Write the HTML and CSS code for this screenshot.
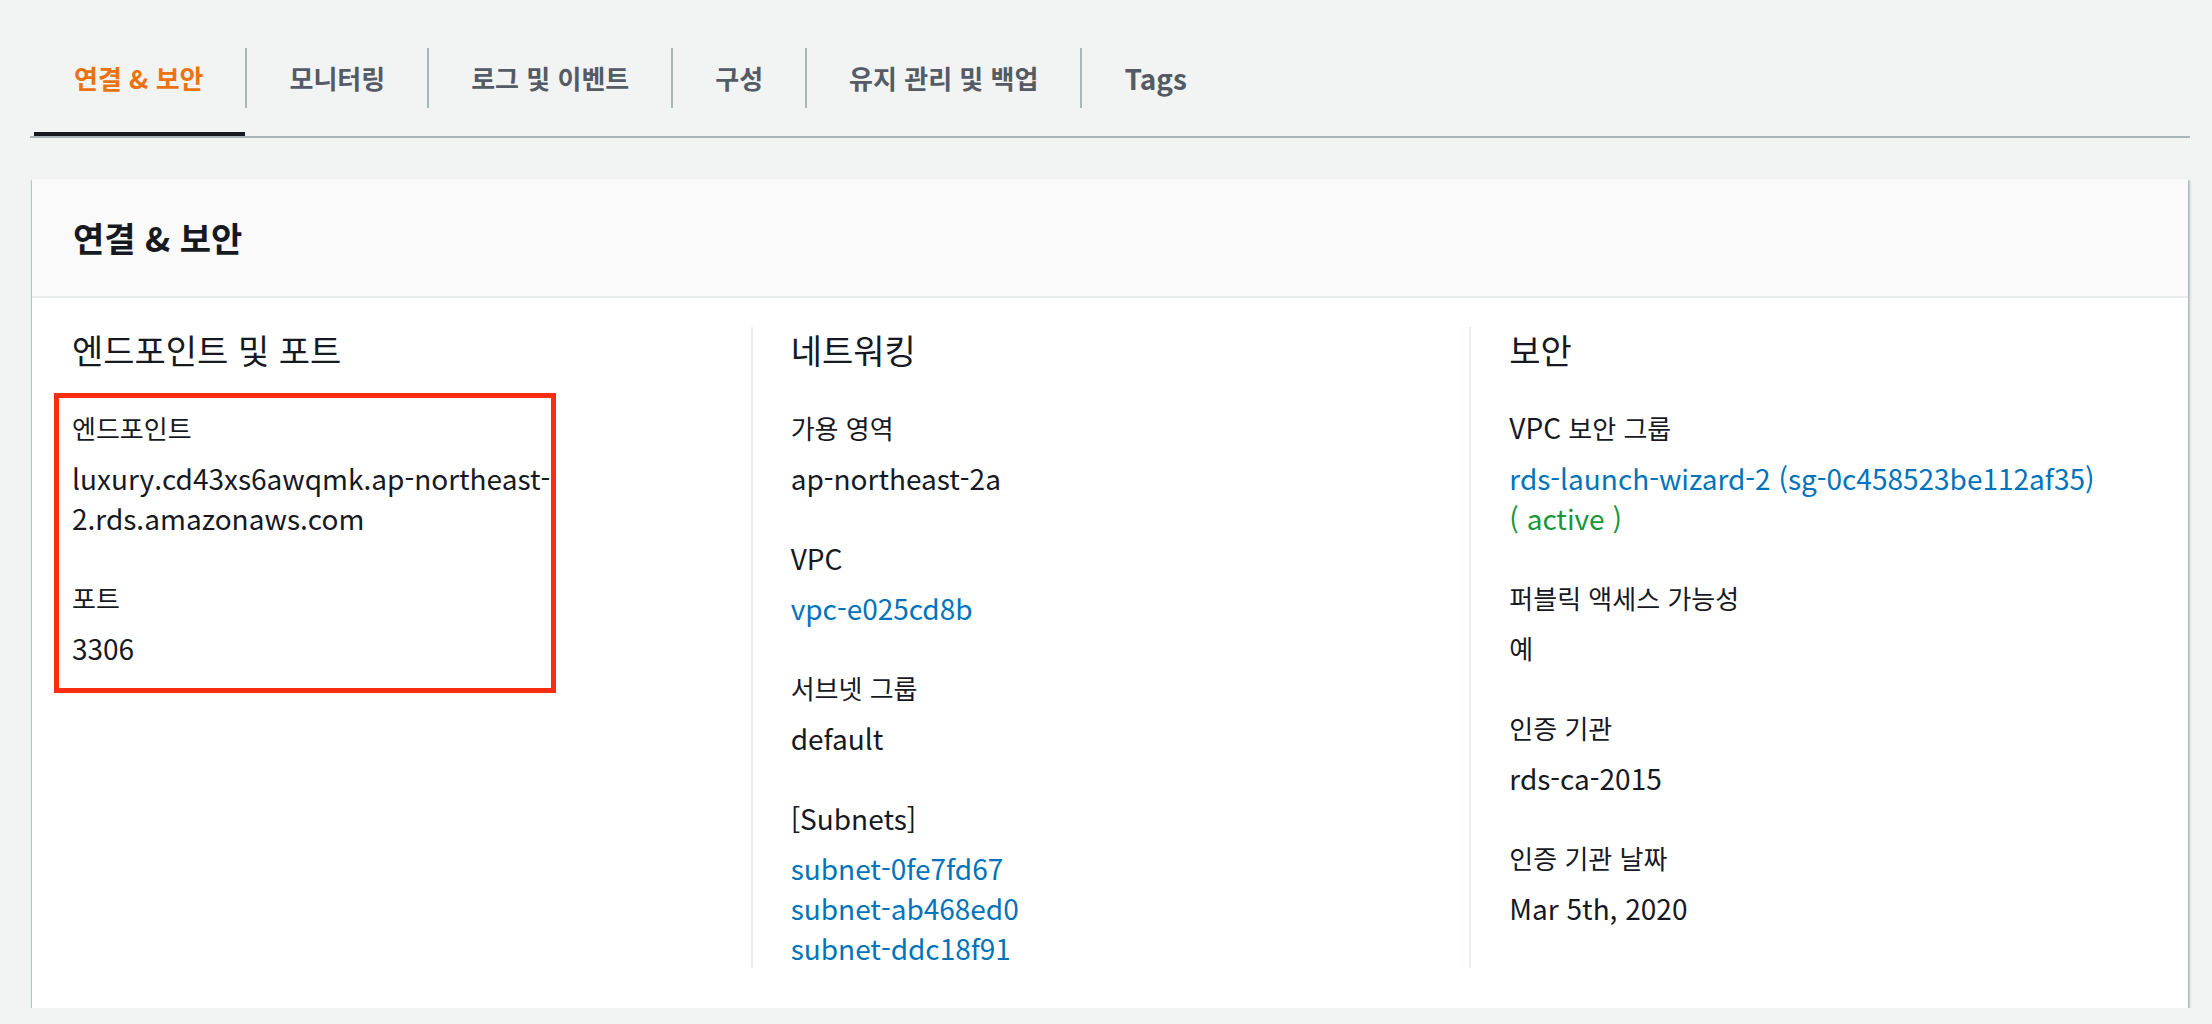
FILE: index.html
```html
<!DOCTYPE html>
<html lang="ko">
<head>
<meta charset="utf-8">
<title>연결 &amp; 보안</title>
<link rel="stylesheet" href="styles.css">
</head>
<body>
<div class="page">
  <nav class="tabs">
    <a class="tab tab-active"><span class="tab-label">연결 &amp; 보안</span></a>
    <a class="tab"><span class="tab-label">모니터링</span></a>
    <a class="tab"><span class="tab-label">로그 및 이벤트</span></a>
    <a class="tab"><span class="tab-label">구성</span></a>
    <a class="tab"><span class="tab-label">유지 관리 및 백업</span></a>
    <a class="tab"><span class="tab-label tab-latin">Tags</span></a>
  </nav>

  <section class="card">
    <header class="card-header">
      <h2 class="card-title">연결 &amp; 보안</h2>
    </header>
    <div class="card-body">
      <div class="col col-first">
        <h3 class="col-title">엔드포인트 및 포트</h3>
        <div class="item">
          <div class="label">엔드포인트</div>
          <div class="value">luxury.cd43xs6awqmk.ap-northeast-2.rds.amazonaws.com</div>
        </div>
        <div class="item">
          <div class="label">포트</div>
          <div class="value">3306</div>
        </div>
        <div class="annot"></div>
      </div>

      <div class="col">
        <h3 class="col-title">네트워킹</h3>
        <div class="item">
          <div class="label">가용 영역</div>
          <div class="value">ap-northeast-2a</div>
        </div>
        <div class="item">
          <div class="label label-latin">VPC</div>
          <div class="value"><a class="link">vpc-e025cd8b</a></div>
        </div>
        <div class="item">
          <div class="label">서브넷 그룹</div>
          <div class="value">default</div>
        </div>
        <div class="item">
          <div class="label label-latin">[Subnets]</div>
          <div class="value">
            <a class="link block">subnet-0fe7fd67</a>
            <a class="link block">subnet-ab468ed0</a>
            <a class="link block">subnet-ddc18f91</a>
          </div>
        </div>
      </div>

      <div class="col">
        <h3 class="col-title">보안</h3>
        <div class="item">
          <div class="label"><span class="latin">VPC</span> 보안 그룹</div>
          <div class="value"><a class="link">rds-launch-wizard-2 (sg-0c458523be112af35)</a><span class="status block">( active )</span></div>
        </div>
        <div class="item">
          <div class="label">퍼블릭 액세스 가능성</div>
          <div class="value value-ko">예</div>
        </div>
        <div class="item">
          <div class="label">인증 기관</div>
          <div class="value">rds-ca-2015</div>
        </div>
        <div class="item">
          <div class="label">인증 기관 날짜</div>
          <div class="value">Mar 5th, 2020</div>
        </div>
      </div>
    </div>
  </section>
</div>
</body>
</html>
```

FILE: styles.css
```css
* { box-sizing: border-box; }

html, body {
  margin: 0;
  padding: 0;
  background: #f2f3f3;
}

body {
  font-family: "Noto Sans CJK KR", "Noto Sans", sans-serif;
  color: #16191f;
}

.page {
  padding: 20px 22px 0 30px;
}

/* Tabs */
.tabs {
  display: flex;
  border-bottom: 2px solid #aab7b8;
  padding-left: 4px;
}

.tab {
  display: block;
  padding: 28px 0 24px;
  border-bottom: 4px solid transparent;
  color: #545b64;
  font-weight: 700;
  font-size: 26px;
  text-decoration: none;
  cursor: pointer;
}

.tab + .tab .tab-label {
  border-left: 2px solid #aab7b8;
}

.tab-label {
  display: block;
  height: 60px;
  line-height: 60px;
  padding: 0 42px;
  white-space: nowrap;
}

.tab:first-child .tab-label {
  padding-left: 40px;
}

.tab-latin {
  font-size: 28px;
}

.tab-active {
  color: #ec7211;
  border-bottom-color: #16191f;
}

/* Card */
.card {
  margin: 41px 2px 0 2px;
  background: #ffffff;
  box-shadow: 0 2px 2px 0 rgba(0, 28, 36, 0.35),
              2px 1px 2px 0 rgba(0, 28, 36, 0.2),
              -1px 1px 1px 0 rgba(0, 28, 36, 0.12);
}

.card-header {
  height: 119px;
  display: flex;
  align-items: center;
  padding: 0 41px;
  background: #fafafa;
  border-bottom: 2px solid #eaeded;
}

.card-title {
  margin: 0;
  font-size: 34px;
  font-weight: 700;
  line-height: 40px;
}

.card-body {
  display: grid;
  grid-template-columns: 1fr 1fr 1fr;
  padding: 29px 0 40px;
}

.col {
  position: relative;
  padding: 0 40px 0 38px;
  border-left: 2px solid #eaeded;
}

.col-first {
  border-left-color: transparent;
}

.col-title {
  margin: 0 0 35px;
  font-size: 34px;
  font-weight: 400;
  line-height: 46px;
}

.item + .item {
  margin-top: 40px;
}

.label {
  font-size: 26px;
  line-height: 40px;
}

.label-latin {
  font-size: 28px;
}

.latin {
  font-size: 28px;
  line-height: 1;
}

.value {
  margin-top: 10px;
  font-size: 28px;
  line-height: 40px;
}

.value-ko {
  font-size: 26px;
}

.link {
  color: #0073bb;
  text-decoration: none;
  cursor: pointer;
}

.block {
  display: block;
}

.status {
  color: #17963a;
}

.annot {
  position: absolute;
  left: 20px;
  top: 66px;
  width: 502px;
  height: 300px;
  border: 5px solid #fc2c10;
  pointer-events: none;
}
```
